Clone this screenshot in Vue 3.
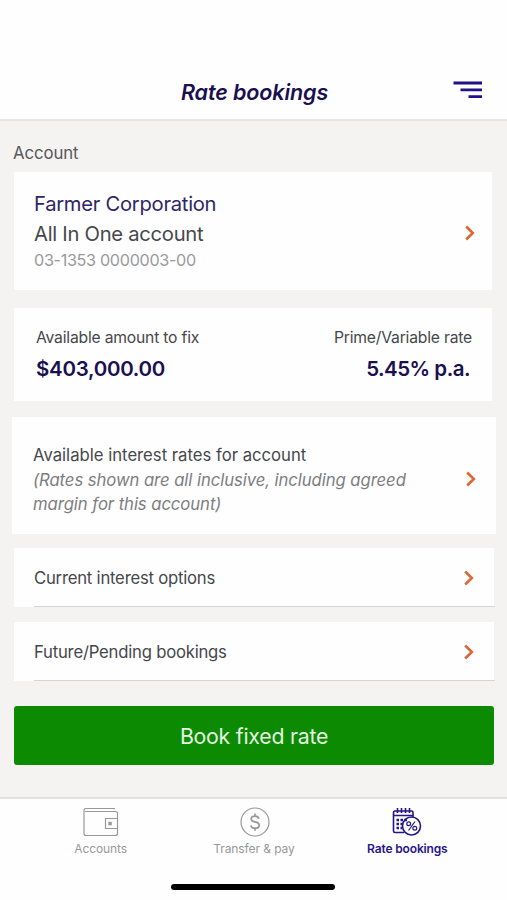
<template>
  <div class="screen">
    <header>
      <h1>Rate bookings</h1>
      <svg class="menu" width="30" height="18" viewBox="0 0 30 18">
        <path d="M0.5 2H29M7.5 8.8H29M15.5 15.6H29" />
      </svg>
    </header>

    <main>
      <h2>Account</h2>

      <section class="card account">
        <div>
          <p class="owner">Farmer Corporation</p>
          <p class="product">All In One account</p>
          <p class="number">03-1353 0000003-00</p>
        </div>
        <svg class="chevron" width="12" height="16" viewBox="0 0 12 16">
          <path d="M2.2 1.5L8.8 8L2.2 14.5" />
        </svg>
      </section>

      <section class="card summary">
        <div>
          <p class="label">Available amount to fix</p>
          <p class="value">$403,000.00</p>
        </div>
        <div class="right">
          <p class="label">Prime/Variable rate</p>
          <p class="value rate">5.45% p.a.</p>
        </div>
      </section>

      <section class="card rates">
        <div>
          <p class="heading">Available interest rates for account</p>
          <p class="note">(Rates shown are all inclusive, including agreed<br>margin for this account)</p>
        </div>
        <svg class="chevron" width="12" height="16" viewBox="0 0 12 16">
          <path d="M2.2 1.5L8.8 8L2.2 14.5" />
        </svg>
      </section>

      <section v-for="link in links" :key="link" class="card link">
        <p>{{ link }}</p>
        <svg class="chevron" width="12" height="16" viewBox="0 0 12 16">
          <path d="M2.2 1.5L8.8 8L2.2 14.5" />
        </svg>
      </section>

      <button>Book fixed rate</button>
    </main>

    <nav>
      <a v-for="tab in tabs" :key="tab.name" :class="{ active: tab.name == currentTab }"
        @click="currentTab = tab.name">
        <svg v-if="tab.name == 'accounts'" width="36" height="32" viewBox="0 0 36 32">
          <path d="M32 1.5H3Q1 1.5 1 3.5V26.5Q1 28.5 3 28.5H32.5Q34.5 28.5 34.5 26.500V6.500Q34.500 4.500 32.500 4.500H2" />
          <path d="M34.500 11.500H22.500V21.500H34.500" />
          <rect class="solid" x="25.300" y="14.800" width="3.500" height="3.500" />
        </svg>
        <svg v-else-if="tab.name == 'transfer'" width="36" height="32" viewBox="0 0 36 32">
          <circle cx="19" cy="15" r="14" />
          <path class="dollar"
            d="M22.800 11.800Q22.300 9.200 19 9.200Q15.200 9.200 15.200 12Q15.200 14.200 19 14.900Q23.200 15.700 23.200 18.400Q23.200 21.200 19 21.200Q15.200 21.200 14.900 18.300M19 6.500V9.200M19 21.200V23.700" />
        </svg>
        <svg v-else width="36" height="32" viewBox="0 0 36 32">
          <path d="M15 25.500H6Q4.500 25.500 4.500 24V5.500Q4.500 4 6 4H22.500Q24 4 24 5.500V10" />
          <path d="M4.500 8.500H24M8.500 1V6M12.500 1V6M16.500 1V6M20.500 1V6" />
          <path class="days" d="M7.500 13H18M7.500 17H14M7.500 21H13" />
          <circle cx="22.500" cy="19" r="9" />
          <path class="percent" d="M26 14.500L19.500 23.500" />
          <circle class="percent" cx="19.700" cy="16.700" r="1.900" />
          <circle class="percent" cx="25.800" cy="21.300" r="1.900" />
        </svg>
        <span>{{ tab.label }}</span>
      </a>
    </nav>

    <div class="home-bar"></div>
  </div>
</template>

<script setup>
import { ref } from 'vue';

const links = ['Current interest options', 'Future/Pending bookings'];

const tabs = [
  { name: 'accounts', label: 'Accounts' },
  { name: 'transfer', label: 'Transfer & pay' },
  { name: 'bookings', label: 'Rate bookings' }
];

const currentTab = ref('bookings');
</script>

<style>
body {
  margin: 0;
}
</style>

<style scoped>
* {
  box-sizing: border-box;
}

.screen {
  display: flex;
  flex-direction: column;
  height: 900px;
  background: #fefefe;
  color: #45474c;
  font-family: Inter, "Liberation Sans", sans-serif;
}

h1,
h2,
p {
  margin: 0;
  font-weight: 400;
  white-space: nowrap;
}

svg {
  display: block;
  flex: none;
  fill: none;
  stroke: currentColor;
}

header {
  display: grid;
  grid-template-columns: 1fr auto 1fr;
  align-items: center;
  height: 121px;
  padding: 65px 24px 0 26px;
  border-bottom: 2px solid #e6e5e4;
}

h1 {
  grid-column: 2;
  color: #1a1050;
  font-size: 21.500px;
  font-style: italic;
  font-weight: 600;
  letter-spacing: -0.1px;
}

.menu {
  justify-self: end;
  margin-bottom: 5px;
  color: #20108a;
  stroke-width: 2.8;
}

main {
  height: 676px;
  padding: 20px 13px 0 14px;
  background: #f4f3f2;
}

h2 {
  height: 31px;
  margin-left: -1px;
  color: #56585b;
  font-size: 16.800px;
  letter-spacing: -0.1px;
  line-height: 24px;
}

.card {
  display: flex;
  align-items: center;
  justify-content: space-between;
  background: #fefefe;
}

.chevron {
  color: #db6735;
  stroke-width: 2.600;
}

.account {
  height: 118px;
  margin-right: 2px;
  padding: 3px 16px 0 20px;
}

.account > div {
  padding-bottom: 4px;
}

.owner {
  color: #2f2665;
  font-size: 20.200px;
  letter-spacing: -0.270px;
  line-height: 30px;
}

.product {
  font-size: 20.200px;
  letter-spacing: -0.270px;
  line-height: 30px;
}

.number {
  color: #9a9a9c;
  font-size: 16.200px;
  letter-spacing: -0.330px;
  line-height: 23px;
}

.summary {
  height: 93px;
  margin: 18px 2px 16px 0;
  padding: 1px 20px 0 22px;
}

.right {
  text-align: right;
}

.label {
  font-size: 15.700px;
  letter-spacing: -0.200px;
  line-height: 28px;
}

.value {
  color: #1a1050;
  font-size: 20.500px;
  font-weight: 600;
  letter-spacing: -0.280px;
  line-height: 34px;
}

.rate {
  padding-right: 2px;
  letter-spacing: -0.500px;
}

.rates {
  height: 117px;
  margin: 0 -2px 14px;
  padding: 8px 19px 0 21px;
}

.rates .chevron {
  margin-bottom: 2px;
}

.heading {
  font-size: 16.700px;
  line-height: 25px;
}

.note {
  color: #7d7d80;
  font-size: 16.700px;
  font-style: italic;
  letter-spacing: -0.070px;
  line-height: 24.500px;
}

.link {
  position: relative;
  height: 59px;
  margin-bottom: 15px;
  padding: 1px 19px 0 20px;
  font-size: 16.700px;
  letter-spacing: -0.220px;
}

.link::after {
  position: absolute;
  right: -1px;
  bottom: 0;
  left: 20px;
  height: 1px;
  background: #d5d5d7;
  content: '';
}

button {
  display: block;
  width: 480px;
  height: 59px;
  margin-top: 25px;
  border: 0;
  border-radius: 3px;
  background: #0b8a02;
  color: #e4f6e0;
  font-family: inherit;
  font-size: 21.300px;
  letter-spacing: -0.250px;
}

nav {
  display: flex;
  height: 87px;
  padding: 8px 23px 0 24px;
  border-top: 2px solid #e2e2e2;
}

nav a {
  display: flex;
  flex: 1;
  flex-direction: column;
  align-items: center;
  color: #98989b;
  font-size: 12px;
  letter-spacing: -0.080px;
  line-height: 20px;
  stroke-width: 1.200;
}

nav a.active {
  color: #251788;
  font-weight: 600;
  letter-spacing: -0.150px;
  stroke-width: 1.600;
}

.solid {
  fill: currentColor;
  stroke: none;
}

.dollar {
  stroke-width: 1.700;
}

.days {
  stroke-dasharray: 2.500 1.500;
  stroke-width: 2.500;
}

.percent {
  stroke-width: 1.200;
}

.home-bar {
  width: 164px;
  height: 6px;
  margin-left: 171px;
  border-radius: 3px;
  background: #000;
}
</style>
